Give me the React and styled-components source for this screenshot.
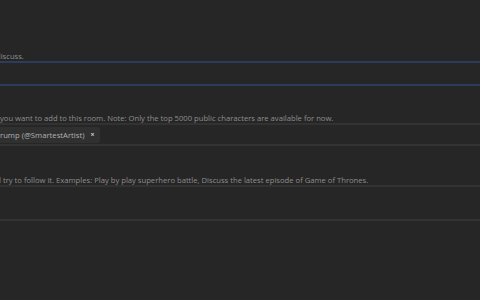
import React from "react";
import styled, { createGlobalStyle } from "styled-components";

const GlobalStyle = createGlobalStyle`
  html, body {
    margin: 0;
    padding: 0;
    background: #262626;
    overflow: hidden;
  }
  body {
    font-family: "Open Sans", "Noto Sans", sans-serif;
  }
`;

const Page = styled.div`
  width: 480px;
  height: 300px;
  padding-top: 51px;
  box-sizing: border-box;
  display: flex;
  flex-direction: column;
  overflow: hidden;
`;

const Field = styled.div`
  display: flex;
  flex-direction: column;
  margin-top: ${(p) => p.$space || 0}px;
`;

const Hint = styled.div`
  font-size: 7.65px;
  line-height: 10px;
  height: 10px;
  color: #8e8e8e;
  white-space: nowrap;
  margin-left: ${(p) => p.$shift || 0}px;
`;

const Box = styled.div`
  margin-left: -6px;
  width: 500px;
  height: ${(p) => p.$height}px;
  box-sizing: border-box;
  border: 2px solid ${(p) => (p.$focused ? "#2e3c5c" : "#323232")};
  display: flex;
  align-items: center;
`;

const Chip = styled.span`
  display: inline-flex;
  align-items: center;
  gap: 6px;
  height: 16px;
  margin-left: -4px;
  padding: 0 6px 0 8px;
  background: #303030;
  border-radius: 2px;
  font-size: 7.7px;
  color: #b0b0b0;
  white-space: nowrap;
`;

const Remove = styled.span`
  font-size: 7px;
  color: #c8c8c8;
  font-weight: 700;
`;

export default function App() {
  return (
    <>
      <GlobalStyle />
      <Page>
        <Field>
          <Hint $shift={-4}>discuss.</Hint>
          <Box $focused $height={25} />
        </Field>
        <Field $space={27}>
          <Hint>
            you want to add to this room. Note: Only the top 5000 public characters are available for now.
          </Hint>
          <Box $height={23}>
            <Chip>
              rump (@SmartestArtist)
              <Remove>×</Remove>
            </Chip>
          </Box>
        </Field>
        <Field $space={29}>
          <Hint $shift={-1}>
            l try to follow it. Examples: Play by play superhero battle, Discuss the latest episode of Game of Thrones.
          </Hint>
          <Box $height={36} />
        </Field>
      </Page>
    </>
  );
}
